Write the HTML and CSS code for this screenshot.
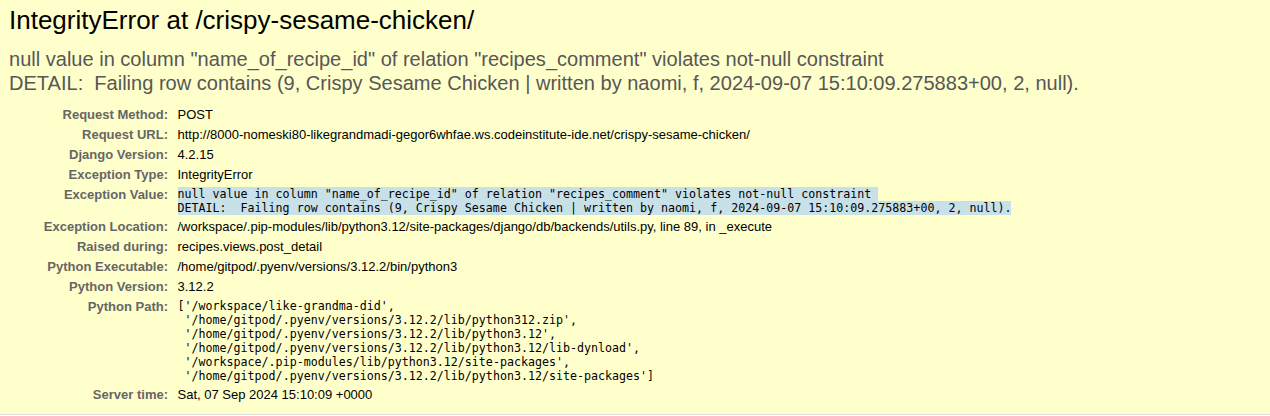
FILE: index.html
```html
<!DOCTYPE html>
<html lang="en">
<head>
<meta charset="utf-8">
<title>IntegrityError at /crispy-sesame-chicken/</title>
<link rel="stylesheet" href="styles.css">
</head>
<body>
<div class="summary">
  <h1 class="title">IntegrityError at /crispy-sesame-chicken/</h1>
  <pre class="exception-value">null value in column "name_of_recipe_id" of relation "recipes_comment" violates not-null constraint
DETAIL:  Failing row contains (9, Crispy Sesame Chicken | written by naomi, f, 2024-09-07 15:10:09.275883+00, 2, null).</pre>
  <table class="meta">
    <tbody>
      <tr><th class="label">Request Method:</th><td class="value">POST</td></tr>
      <tr><th class="label">Request URL:</th><td class="value">http://8000-nomeski80-likegrandmadi-gegor6whfae.ws.codeinstitute-ide.net/crispy-sesame-chicken/</td></tr>
      <tr><th class="label">Django Version:</th><td class="value">4.2.15</td></tr>
      <tr><th class="label">Exception Type:</th><td class="value">IntegrityError</td></tr>
      <tr><th class="label">Exception Value:</th><td class="value"><pre class="code"><span class="sel">null value in column "name_of_recipe_id" of relation "recipes_comment" violates not-null constraint </span>
<span class="sel">DETAIL:  Failing row contains (9, Crispy Sesame Chicken | written by naomi, f, 2024-09-07 15:10:09.275883+00, 2, null).</span></pre></td></tr>
      <tr><th class="label">Exception Location:</th><td class="value">/workspace/.pip-modules/lib/python3.12/site-packages/django/db/backends/utils.py, line 89, in _execute</td></tr>
      <tr><th class="label">Raised during:</th><td class="value">recipes.views.post_detail</td></tr>
      <tr><th class="label">Python Executable:</th><td class="value">/home/gitpod/.pyenv/versions/3.12.2/bin/python3</td></tr>
      <tr><th class="label">Python Version:</th><td class="value">3.12.2</td></tr>
      <tr><th class="label">Python Path:</th><td class="value"><pre class="code">['/workspace/like-grandma-did',
 '/home/gitpod/.pyenv/versions/3.12.2/lib/python312.zip',
 '/home/gitpod/.pyenv/versions/3.12.2/lib/python3.12',
 '/home/gitpod/.pyenv/versions/3.12.2/lib/python3.12/lib-dynload',
 '/workspace/.pip-modules/lib/python3.12/site-packages',
 '/home/gitpod/.pyenv/versions/3.12.2/lib/python3.12/site-packages']</pre></td></tr>
      <tr><th class="label">Server time:</th><td class="value">Sat, 07 Sep 2024 15:10:09 +0000</td></tr>
    </tbody>
  </table>
</div>
</body>
</html>
```

FILE: styles.css
```css
html, body {
  margin: 0;
  padding: 0;
}

body {
  background: #fff;
  color: #000;
  font-family: "Liberation Sans", Arial, sans-serif;
  font-size: 13px;
}

.summary {
  background: #ffc;
  padding: 5px 9px 9px;
  border-bottom: 1px solid #ddd;
}

.title {
  margin: 0;
  font-size: 26px;
  font-weight: normal;
  line-height: 30px;
}

.exception-value {
  margin: 12px 0 10px;
  font-family: "Liberation Sans", Arial, sans-serif;
  font-size: 20.05px;
  line-height: 24px;
  color: #575757;
  white-space: pre-wrap;
}

.meta {
  border: none;
  background: transparent;
  border-collapse: collapse;
}

.meta td,
.meta th {
  vertical-align: top;
  padding: 2px 3px;
  line-height: 16px;
}

.label {
  width: 156px;
  text-align: right;
  color: #666;
  font-weight: bold;
  padding-right: 6.5px !important;
  white-space: nowrap;
}

.value {
  color: #000;
}

.code {
  margin: 0;
  font-family: "DejaVu Sans Mono", monospace;
  font-size: 11.65px;
  line-height: 14px;
  white-space: pre-wrap;
}

.sel {
  background: #c8e1e8;
}
```
